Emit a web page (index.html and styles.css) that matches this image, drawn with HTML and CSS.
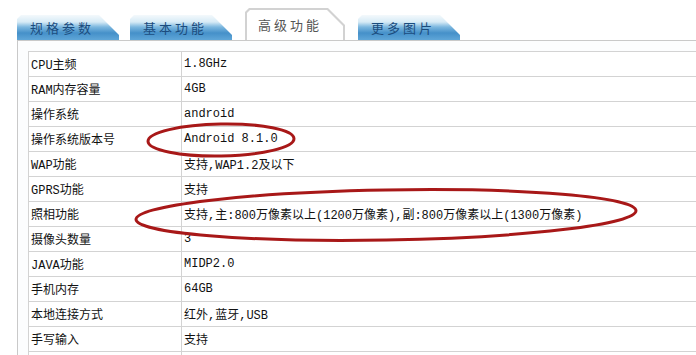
FILE: index.html
```html
<!DOCTYPE html>
<html lang="zh-CN">
<head>
  <meta charset="UTF-8">
  <meta name="viewport" content="width=device-width, initial-scale=1.0">
  <title>手机参数</title>
  <link rel="stylesheet" href="styles.css">
</head>
<body>
  <div class="tabs">
    <div class="tab">规格参数</div>
    <div class="tab">基本功能</div>
    <div class="tab tab-active"><span class="tab-inner">高级功能</span></div>
    <div class="tab">更多图片</div>
  </div>

  <div class="panel">
    <table class="spec">
      <tr><td class="name">CPU主频</td><td>1.8GHz</td></tr>
      <tr><td class="name">RAM内存容量</td><td>4GB</td></tr>
      <tr><td class="name">操作系统</td><td>android</td></tr>
      <tr><td class="name">操作系统版本号</td><td>Android 8.1.0</td></tr>
      <tr><td class="name">WAP功能</td><td>支持,WAP1.2及以下</td></tr>
      <tr><td class="name">GPRS功能</td><td>支持</td></tr>
      <tr><td class="name">照相功能</td><td>支持,主:800万像素以上(1200万像素),副:800万像素以上(1300万像素)</td></tr>
      <tr><td class="name">摄像头数量</td><td>3</td></tr>
      <tr><td class="name">JAVA功能</td><td>MIDP2.0</td></tr>
      <tr><td class="name">手机内存</td><td>64GB</td></tr>
      <tr><td class="name">本地连接方式</td><td>红外,蓝牙,USB</td></tr>
      <tr><td class="name">手写输入</td><td>支持</td></tr>
      <tr><td class="name"></td><td></td></tr>
    </table>
  </div>

  <!-- hand-drawn marks over the table -->
  <svg class="marks" width="696" height="355" viewBox="0 0 696 355">
    <ellipse cx="221" cy="140" rx="73" ry="16" transform="rotate(-1 221 140)"/>
    <ellipse cx="386" cy="215" rx="250" ry="25" transform="rotate(-1 386 215)"/>
  </svg>
</body>
</html>
```

FILE: styles.css
```css
/* Page */
body {
  margin: 0;
  position: relative;
  width: 696px;
  height: 355px;
  overflow: hidden;
  background-color: #fff;
  color: #111;
  font-family: "Liberation Mono", "Noto Sans CJK SC", monospace;
  font-size: 12px;
}

/* Tabs */
.tabs {
  display: flex;
  align-items: flex-end;
  gap: 11px;
  height: 40px;
  padding-left: 17px;
}
.tab {
  width: 102px;
  height: 25px;
  box-sizing: border-box;
  padding-left: 13px;
  line-height: 26px;
  font-family: "Noto Sans CJK SC", sans-serif;
  font-size: 13px;
  letter-spacing: 3px;
  color: #1b4c7e;
  background: linear-gradient(#f4f9fc 0%, #d7ebf6 28%, #7cb7df 48%, #4590c9 72%, #5fa6d8 100%);
  clip-path: polygon(0 4px, 4px 0, 82px 0, 102px 20px, 102px 100%, 0 100%);
}
.tab-active {
  width: 100px;
  height: 32px;
  margin: 0 2px;
  padding: 2px 2px 0;
  background: #d2d2d2;
  clip-path: polygon(0 4px, 4px 0, 83px 0, 100px 17px, 100px 100%, 0 100%);
}
.tab-inner {
  display: block;
  height: 100%;
  padding: 3px 0 0 11px;
  box-sizing: border-box;
  line-height: 24px;
  color: #555;
  background: #fff;
  clip-path: polygon(0 3px, 3px 0, 80px 0, 96px 16px, 96px 100%, 0 100%);
}

/* Panel + spec table */
.panel {
  margin-left: 17px;
  padding: 10px 0 0 10px;
  border-top: 1px solid #c9c9c9;
  border-left: 1px solid #c9c9c9;
  background-color: #fcfdfe;
}
.spec {
  width: 669px;
  border-collapse: collapse;
  background-color: #fff;
}
.spec td {
  height: 24px;
  padding: 0 2px;
  border: 1px solid #d3d3d3;
  white-space: nowrap;
}
.spec td.name {
  width: 148px;
}

/* Red marker rings */
.marks {
  position: absolute;
  top: 0;
  left: 0;
  pointer-events: none;
}
.marks ellipse {
  fill: none;
  stroke: #a81818;
  stroke-width: 3;
}
```
